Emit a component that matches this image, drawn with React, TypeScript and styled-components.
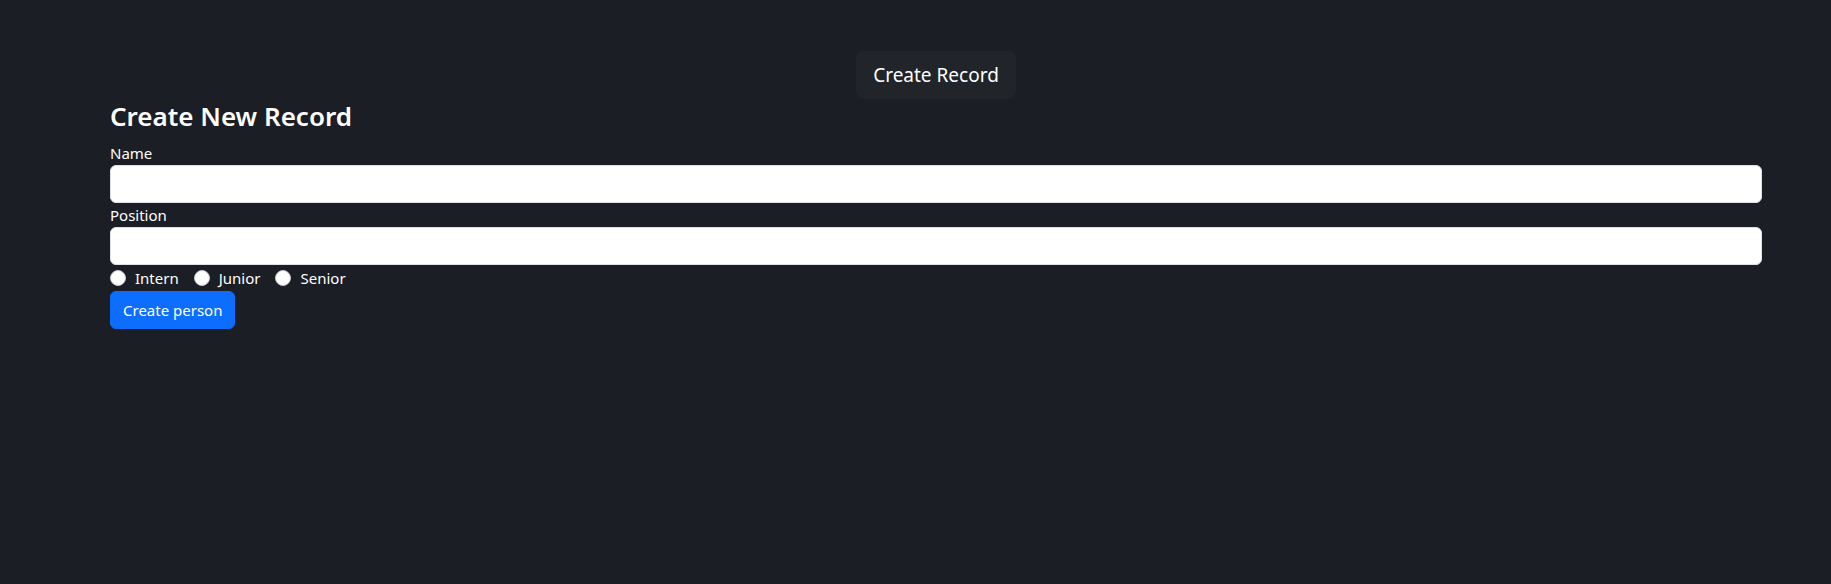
import React, { useState } from 'react'
import styled, { createGlobalStyle } from 'styled-components'

const GlobalStyle = createGlobalStyle`
    html, body {
        margin: 0;
        padding: 0;
        background-color: #1b1e25;
        color: #ffffff;
        font-family: "Noto Sans", "Open Sans", sans-serif;
        font-size: 15px;
        line-height: 1.5;
    }
    * {
        box-sizing: border-box;
    }
`;

const Page = styled.div`
    min-height: 584px;
    padding: 51px 69px 0 110px;
`;

const Nav = styled.nav`
    display: flex;
    justify-content: center;
`;

const NavButton = styled.button`
    background-color: #212529;
    color: #ffffff;
    border: none;
    border-radius: 8px;
    padding: 9px 17px;
    font-family: inherit;
    font-size: 19px;
    line-height: 30px;
    cursor: pointer;
`;

const Title = styled.h3`
    margin: 0 0 8px 0;
    font-size: 26px;
    font-weight: 600;
    line-height: 34px;
`;

const Form = styled.form`
    display: flex;
    flex-direction: column;
`;

const Label = styled.label`
    display: block;
    font-size: 15px;
    line-height: 24px;
`;

const Input = styled.input`
    display: block;
    width: 100%;
    height: 38px;
    padding: 6px 12px;
    border: 1px solid #dee2e6;
    border-radius: 6px;
    background-color: #ffffff;
    font-family: inherit;
    font-size: 16px;
    outline: none;
`;

const RadioRow = styled.div`
    display: flex;
    align-items: center;
    gap: 15px;
    height: 26px;
`;

const RadioLabel = styled.label`
    display: flex;
    align-items: center;
    gap: 9px;
    font-size: 15px;
    line-height: 24px;
    cursor: pointer;
`;

const Radio = styled.input`
    appearance: none;
    width: 16px;
    height: 16px;
    margin: 0;
    border-radius: 50%;
    border: 1px solid #c4c8cc;
    background-color: #ffffff;
    &:checked {
        border: 5px solid #0d6efd;
    }
`;

const SubmitButton = styled.button`
    align-self: flex-start;
    height: 38px;
    padding: 6px 12px;
    background-color: #0d6efd;
    color: #ffffff;
    border: 1px solid #0d6efd;
    border-radius: 6px;
    font-family: inherit;
    font-size: 15px;
    line-height: 24px;
    cursor: pointer;
`;

const levels = ['Intern', 'Junior', 'Senior']

function App() {
    const [level, setLevel] = useState('')

    return (
        <Page>
            <GlobalStyle />
            <Nav>
                <NavButton type="button">Create Record</NavButton>
            </Nav>
            <Title>Create New Record</Title>
            <Form onSubmit={(e) => e.preventDefault()}>
                <Label htmlFor="name">Name</Label>
                <Input id="name" type="text" />
                <Label htmlFor="position">Position</Label>
                <Input id="position" type="text" />
                <RadioRow>
                    {levels.map((lv) => (
                        <RadioLabel key={lv}>
                            <Radio
                                type="radio"
                                name="level"
                                value={lv}
                                checked={level === lv}
                                onChange={() => setLevel(lv)}
                            />
                            {lv}
                        </RadioLabel>
                    ))}
                </RadioRow>
                <SubmitButton type="submit">Create person</SubmitButton>
            </Form>
        </Page>
    )
}

export default App
